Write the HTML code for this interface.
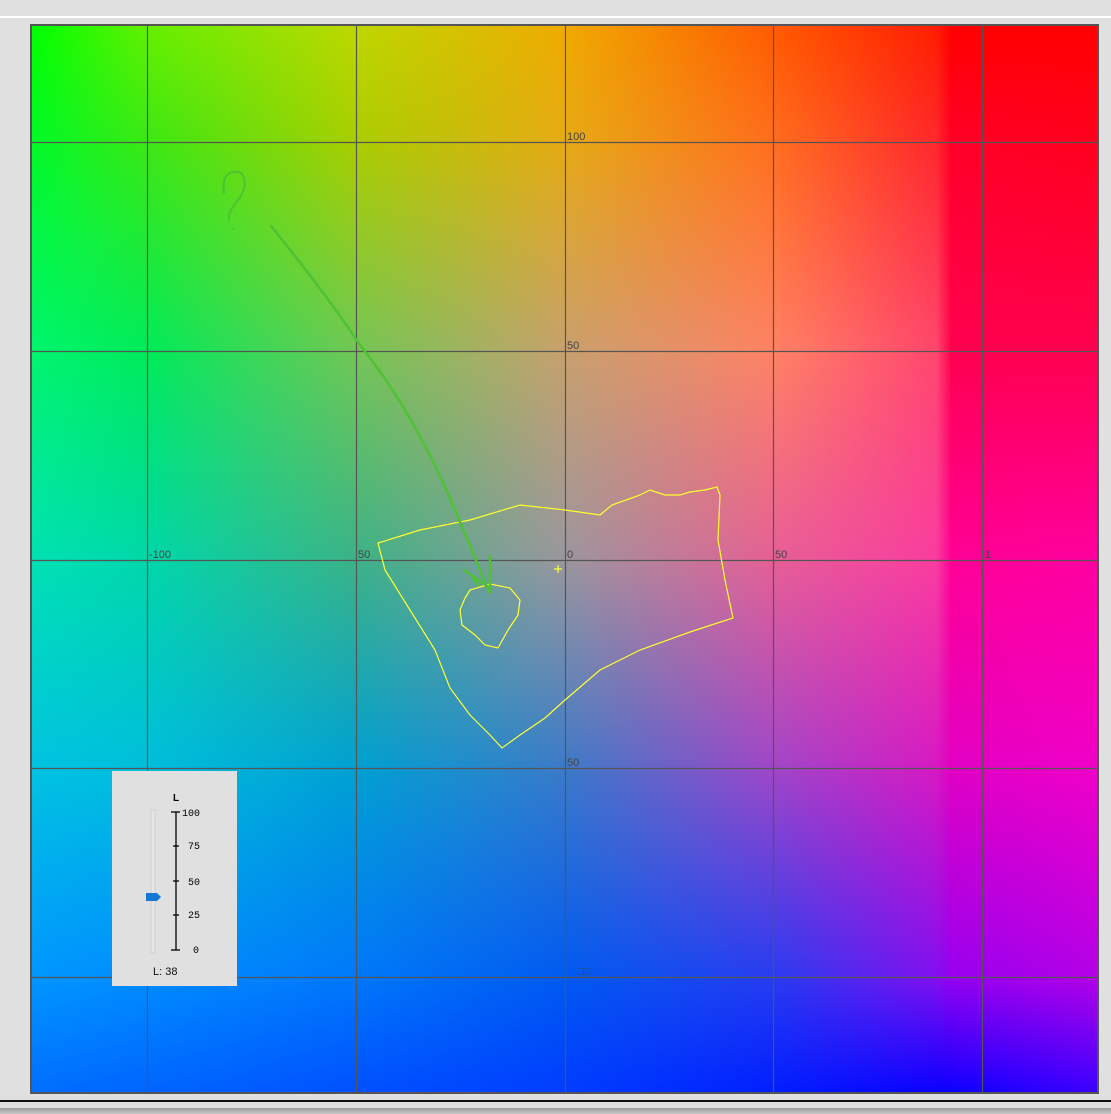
<!DOCTYPE html>
<html><head><meta charset="utf-8"><style>
html,body{margin:0;padding:0;background:#e0e0e0;width:1111px;height:1114px;overflow:hidden;position:relative;font-family:"Liberation Sans",sans-serif}
#c{position:absolute;left:31px;top:25px}
svg{position:absolute;left:0;top:0}
</style></head><body>
<div style="position:absolute;left:0;top:16px;width:1111px;height:2px;background:#fff"></div>
<div style="position:absolute;left:0;top:1100px;width:1111px;height:2px;background:#111"></div>
<div style="position:absolute;left:0;top:1108px;width:1111px;height:6px;background:linear-gradient(#9a9a9a,#c8c8c8)"></div>
<canvas id="c" width="1067" height="1068"></canvas>
<svg width="1111" height="1114" xmlns="http://www.w3.org/2000/svg">
<rect x="31" y="25" width="1067" height="1068" fill="none" stroke="#555" stroke-width="2"/>
<g stroke="#555" stroke-width="1.2">
<line x1="147.5" y1="25" x2="147.5" y2="1093"/><line x1="356.5" y1="25" x2="356.5" y2="1093"/><line x1="565.5" y1="25" x2="565.5" y2="1093"/><line x1="773.5" y1="25" x2="773.5" y2="1093"/><line x1="982.5" y1="25" x2="982.5" y2="1093"/>
<line x1="31" y1="142.5" x2="1098" y2="142.5"/><line x1="31" y1="351.5" x2="1098" y2="351.5"/><line x1="31" y1="560.5" x2="1098" y2="560.5"/><line x1="31" y1="768.5" x2="1098" y2="768.5"/><line x1="31" y1="977.5" x2="1098" y2="977.5"/>
</g>
<g fill="#444" font-size="11">
<text x="567" y="140">100</text><text x="567" y="349">50</text><text x="567" y="558">0</text><text x="149" y="558">-100</text><text x="358" y="558">50</text><text x="775" y="558">50</text><text x="567" y="766">50</text><text x="577" y="975">□□</text><text x="985" y="558">1</text>
</g>
<g fill="none" stroke="#ffff30" stroke-width="1.2">
<polygon points="378,543 420,530 470,520 520,505 565,510 600,515 612,505 640,495 650,490 665,495 680,495 690,492 705,490 717,487 720,495 718,540 725,580 733,618 690,632 640,650 600,670 565,700 545,718 520,735 502,748 490,735 470,715 450,688 435,650 410,610 385,570"/>
<polygon points="470,590 490,584 510,588 520,600 518,615 508,630 498,648 485,645 475,635 462,625 460,610 465,598"/>
<path d="M554,569h8M558,565v8"/>
</g>
<g fill="none" stroke="#4ec234" stroke-width="2.5" stroke-linecap="round">
<path d="M271,226 C300,262 330,300 360,345 C400,395 430,450 455,510 C470,545 480,570 489,592"/>
<path d="M464,570 L487,586 M490,556 L490,592 M472,576 L478,585"/>
<path d="M224,193 C222,180 225,170 240,172 C247,178 246,190 238,200 C230,210 228,215 229,220" stroke-width="2"/>
<circle cx="233" cy="229" r="1" fill="#4ec234" stroke="none"/>
</g>
<rect x="112" y="771" width="125" height="215" fill="#e0e0e0"/>
<text x="173" y="801" font-size="10" font-weight="bold" fill="#000">L</text>
<rect x="151" y="810" width="4" height="143" fill="#e6e6e6" stroke="#d0d0d0"/>
<path d="M146,893h11l4,4l-4,4h-11z" fill="#1477d4"/>
<g stroke="#000" stroke-width="1.3"><line x1="176" y1="812" x2="176" y2="950"/>
<line x1="171" y1="812" x2="180" y2="812"/><line x1="173" y1="846" x2="179" y2="846"/><line x1="173" y1="881" x2="179" y2="881"/><line x1="173" y1="915" x2="179" y2="915"/><line x1="171" y1="950" x2="180" y2="950"/></g>
<g font-size="10" fill="#000" font-family="Liberation Mono,monospace"><text x="182" y="816">100</text><text x="188" y="849">75</text><text x="188" y="885">50</text><text x="188" y="918">25</text><text x="193" y="953">0</text></g>
<text x="153" y="975" font-size="11" fill="#111">L: 38</text>
</svg>
<script>
var xs=[0,116,325,534,742,905,920,1067],ys=[0,117,326,535,743,952,1068];
var G=[
[[0,255,0],[100,240,0],[190,215,0],[240,170,0],[255,90,0],[255,30,0],[255,0,0],[255,0,0]],
[[0,250,40],[60,232,20],[170,205,0],[230,170,20],[255,110,30],[255,40,45],[255,0,40],[255,0,30]],
[[0,245,110],[0,235,90],[115,198,85],[200,160,110],[255,130,100],[255,70,110],[255,0,80],[255,0,80]],
[[0,225,180],[0,215,170],[60,178,135],[155,150,158],[230,95,150],[250,60,160],[255,0,150],[255,0,160]],
[[0,195,225],[0,190,220],[0,160,210],[60,122,200],[160,70,200],[215,25,195],[225,0,195],[240,0,200]],
[[0,150,255],[0,140,255],[0,120,250],[0,90,240],[40,60,240],[130,15,240],[150,0,240],[180,0,230]],
[[0,110,255],[0,100,255],[0,80,255],[0,60,255],[0,30,255],[10,0,255],[10,0,255],[60,0,255]]];
var c=document.getElementById('c'),ctx=c.getContext('2d'),W=1067,H=1068,im=ctx.createImageData(W,H),d=im.data;
function seg(a,v){for(var i=0;i<a.length-2;i++)if(v<a[i+1])return i;return a.length-2;}
for(var y=0;y<H;y++){var j=seg(ys,y),ty=(y-ys[j])/(ys[j+1]-ys[j]);
for(var x=0;x<W;x++){var i=seg(xs,x),tx=(x-xs[i])/(xs[i+1]-xs[i]),p=(y*W+x)*4;
for(var k=0;k<3;k++){var a=G[j][i][k]*(1-tx)+G[j][i+1][k]*tx,b=G[j+1][i][k]*(1-tx)+G[j+1][i+1][k]*tx;d[p+k]=a*(1-ty)+b*ty;}d[p+3]=255;}}
ctx.putImageData(im,0,0);
</script>
</body></html>
